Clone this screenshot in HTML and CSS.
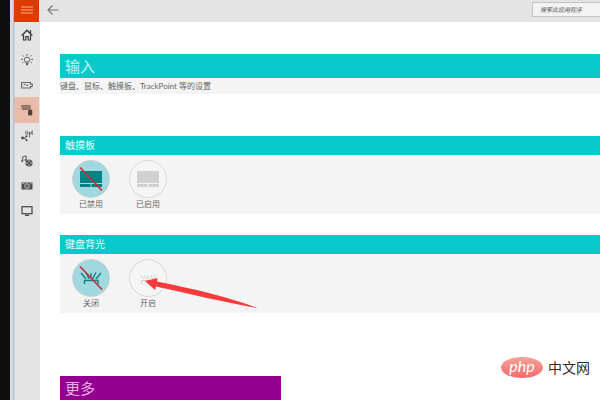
FILE: index.html
```
<!DOCTYPE html>
<html lang="zh-CN">
<head>
<meta charset="utf-8">
<title>输入</title>
<link rel="stylesheet" href="styles.css">
</head>
<body>
<div class="app">
  <nav class="sidebar" aria-label="导航">
    <button class="menu" type="button" aria-label="菜单">
      <svg width="12" height="8" viewBox="0 0 12 8"><path d="M0 1h12M0 4h12M0 7h12" stroke="#ffb08c" stroke-width="1"/></svg>
    </button>
    <a class="item" href="#home" aria-label="主页">
      <svg width="12" height="12" viewBox="0 0 12 12" fill="none" stroke="#3c3c3c"><path d="M.7 6.5 6 1.3l5.3 5.2" stroke-width="1.5"/><path d="M2.500 6v5h2.300V7.700h2.400V11h2.300V6M9.500 1v3" stroke-width="1.200"/></svg>
    </a>
    <a class="item" href="#power" aria-label="灯光">
      <svg width="12" height="12" viewBox="0 0 12 12" fill="none" stroke="#555"><path d="M4.600 8C3.200 6.800 3 5.500 3.800 4.200c1-1.300 3.400-1.300 4.400 0C9 5.500 8.800 6.800 7.400 8z"/><path d="M4.500 9.200h3M5 10.700h2" stroke-width="1.300"/><path d="M6 0v1.700M1.500 1.300l1.200 1.200M10.500 1.300 9.300 2.500M0 5.300h1.800M10.200 5.300H12M1.200 9l1.200-1M10.800 9 9.600 8"/></svg>
    </a>
    <a class="item" href="#battery" aria-label="电池">
      <svg width="12" height="12" viewBox="0 0 12 12" fill="none" stroke="#666"><path d="M.5 3.500h9v1.500h1.700v2.500H9.500V9h-9z" stroke-width="1.200"/><path d="M2.500 6l2-.7 1 1.300 2-.6"/></svg>
    </a>
    <a class="item current" href="#input" aria-label="输入">
      <svg width="12" height="12" viewBox="0 0 12 12"><path d="M0 1h9.500v4.500H7L6 6H1z" fill="#846c61"/><path d="M1 2.500h8M1.500 4.200h6" stroke="#d6b1a0" stroke-width=".6" stroke-dasharray="1 .7"/><rect x="7" y="5.500" width="4.300" height="6" rx="1.500" fill="#4d413c"/><path d="M9.200 4v3.500" stroke="#8b7367" stroke-width=".6"/></svg>
    </a>
    <a class="item" href="#network" aria-label="网络">
      <svg width="12" height="12" viewBox="0 0 12 12" fill="none" stroke="#4c4c4c"><path d="M1.500 8h2l2-1.500M3.500 8l2 2.300" /><g fill="#4c4c4c" stroke="none"><circle cx="1.500" cy="8" r="1.400"/><circle cx="5.500" cy="6.300" r="1"/><circle cx="5.600" cy="10.300" r="1"/><circle cx="8.500" cy="3" r="1"/></g><path d="M8.500 3v4.500M6.800 1.300c-.7 1-.7 2.200 0 3.200M10.200 1.300c.7 1 .7 2.200 0 3.200M5.300.5c-.8 1.500-.8 3 0 4.300M11.500.5c.6 1.500.6 3 0 4.300" stroke-width=".8"/></svg>
    </a>
    <a class="item" href="#media" aria-label="影音">
      <svg width="12" height="12" viewBox="0 0 12 12"><path d="M1.700 6V1.700L5.200 1v4" fill="none" stroke="#555"/><circle cx="1.200" cy="6" r="1.100" fill="#555"/><circle cx="4.500" cy="5" r="1" fill="#555"/><circle cx="8" cy="8" r="3.500" fill="#505050"/><g fill="#ccc"><circle cx="8" cy="6" r=".8"/><circle cx="8" cy="10" r=".8"/><circle cx="6" cy="8" r=".8"/><circle cx="10" cy="8" r=".8"/></g></svg>
    </a>
    <a class="item" href="#camera" aria-label="相机">
      <svg width="12" height="12" viewBox="0 0 12 12"><path d="M.5 2.500H11.500V9.500H.5z" fill="#4d4d4d"/><circle cx="6" cy="6" r="2.300" fill="#555" stroke="#d5d5d5" stroke-width=".9"/><path d="M1.300 3.500h2M9 3.700h1.500" stroke="#ccc" stroke-width=".8"/></svg>
    </a>
    <a class="item" href="#display" aria-label="显示">
      <svg width="12" height="12" viewBox="0 0 12 12"><rect x="1" y="1.700" width="10" height="7" fill="none" stroke="#505050" stroke-width="1.300"/><path d="M4 10.300h4" stroke="#505050" stroke-width="1.500"/></svg>
    </a>
  </nav>

  <div class="page">
    <header class="topbar">
      <button class="back" type="button" aria-label="返回">
        <svg width="12" height="10" viewBox="0 0 12 10" fill="none" stroke="#777" stroke-width="1.200"><path d="M5.500.5 1 5l4.500 4.500M1 5h10.500"/></svg>
      </button>
      <input class="search" type="search" aria-label="搜索此应用程序" placeholder="搜索此应用程序">
    </header>

    <main class="content">
      <section class="intro">
        <h1 class="title">输入</h1>
        <p class="summary">键盘、鼠标、触摸板、TrackPoint 等的设置</p>
      </section>

      <section class="card">
        <h2 class="heading">触摸板</h2>
        <div class="options">
          <button class="option" type="button" aria-pressed="true">
            <svg class="disc" viewBox="0 0 38 38"><circle cx="19" cy="19" r="18.500" fill="#9fd8de" stroke="#cbd3d4"/><path d="M8 11h22v12H8zM8 24h10.500v3H8zM19.500 24H30v3H19.500z" fill="#078282"/><path d="M8 7.500 30 30.500" stroke="#c52f38" stroke-width="1.700"/></svg>
            <span>已禁用</span>
          </button>
          <button class="option" type="button" aria-pressed="false">
            <svg class="disc" viewBox="0 0 38 38"><circle cx="19" cy="19" r="18.500" fill="#f5f5f5" stroke="#d7d7d7"/><path d="M8 11h22v12H8zM8 24h10.500v3H8zM19.500 24H30v3H19.500z" fill="#d0d1d3"/></svg>
            <span>已启用</span>
          </button>
        </div>
      </section>

      <section class="card">
        <h2 class="heading">键盘背光</h2>
        <div class="options">
          <button class="option" type="button" aria-pressed="true">
            <svg class="disc" viewBox="0 0 38 38"><circle cx="19" cy="19" r="18.500" fill="#9fd8de" stroke="#cbd3d4"/><path d="M12.500 25v-3.500h13.500V25M9 14l5 6M14 13.500l3 6.500M19 14v5M24 13.500 20.500 20M29 14l-5 6" fill="none" stroke="#128282" stroke-width="1.400"/><path d="M8 7.500 30 30.500" stroke="#c52f38" stroke-width="1.700"/></svg>
            <span>关闭</span>
          </button>
          <button class="option" type="button" aria-pressed="false">
            <svg class="disc" viewBox="0 0 38 38"><circle cx="19" cy="19" r="18.500" fill="#f5f5f5" stroke="#d7d7d7"/><path d="M12.500 25v-3.500h13.500V25M11 16l4 4M15 16l2 4M19 16v4M23 16l-2 4M27 16l-4 4" fill="none" stroke="#d0d0d0"/></svg>
            <span>开启</span>
            <svg class="pointer" width="114" height="31" viewBox="0 0 114 31"><path d="M0 3 12.500 0l-.5 3.500C50 11 85 19.500 114 30.500 80 24.500 45 16 11 8.500l-1 3.500z" fill="#f83a3a"/></svg>
          </button>
        </div>
      </section>

      <section class="more">
        <h2 class="title">更多</h2>
      </section>
    </main>
  </div>

  <div class="brand">
    <span class="badge">php</span>
    <span>中文网</span>
  </div>
</div>
</body>
</html>
```
FILE: styles.css
```
* {
  box-sizing: border-box;
}

body {
  margin: 0;
  background: #fff;
  color: #666;
  font-family: Lato, "Noto Sans CJK SC", sans-serif;
  font-size: 8px;
  line-height: 12px;
}

button {
  margin: 0;
  padding: 0;
  border: 0;
  background: none;
  color: inherit;
  font: inherit;
}

h1,
h2,
p {
  margin: 0;
  font-weight: 400;
}

svg {
  display: block;
}

.app {
  display: flex;
  height: 100vh;
  overflow: hidden;
  border-left: 10px solid #0f0f0f;
}

.sidebar {
  display: flex;
  flex: none;
  flex-direction: column;
  width: 30px;
  padding: 0 1px 0 4px;
  background: linear-gradient(to right, #d9dcdf 3px, #a9c2d6 3px, #a9c2d6 4px, #e4e4e4 5px);
}

.menu {
  display: grid;
  flex: none;
  place-items: center;
  height: 22px;
  padding-bottom: 3px;
  background: #dc3c00;
}

.item {
  display: grid;
  flex: none;
  place-items: center;
  height: 25px;
}

.current {
  height: 26px;
  background: #e8bca8;
}

.page {
  flex: 1;
  min-width: 0;
}

.topbar {
  display: flex;
  align-items: center;
  justify-content: space-between;
  height: 22px;
  padding: 0 0 3px 7px;
  background: #e4e4e4;
}

.search {
  width: 68px;
  height: 15px;
  padding: 0 7px;
  border: 1px solid #c4c4c4;
  border-right: 0;
  border-radius: 0;
  outline: 0;
  background: #f3f3f3;
  color: #555;
  font: italic 6px/12px Lato, "Noto Sans CJK SC", sans-serif;
}

.search::placeholder {
  color: #555;
  opacity: 1;
}

.content {
  padding: 32px 0 0 20px;
}

.title {
  height: 24px;
  padding-left: 5px;
  color: #c4f5f4;
  font-size: 15px;
  line-height: 24px;
}

.intro {
  margin-bottom: 42px;
  background: #f4f4f4;
}

.intro .title {
  background: #06caca;
}

.summary {
  padding: 2px 0;
}

.card {
  margin-bottom: 21px;
  background: #f4f4f4;
}

.heading {
  padding-left: 5px;
  background: #06caca;
  color: #e8fffe;
  font-size: 10px;
  line-height: 19px;
}

.options {
  display: flex;
  gap: 19px;
  padding: 5px 12px 4px;
}

.option {
  position: relative;
  display: flex;
  flex-direction: column;
  align-items: center;
  width: 38px;
}

.disc {
  width: 38px;
  height: 38px;
}

.pointer {
  position: absolute;
  top: 19px;
  left: 16px;
}

.more {
  width: 41%;
  margin-top: 63px;
  padding-bottom: 8px;
  background: #930090;
}

.more .title {
  color: #e6b0e3;
}

.brand {
  position: absolute;
  right: 10px;
  bottom: 22px;
  display: flex;
  align-items: center;
  gap: 5px;
  color: #352a2a;
  font-size: 14px;
  line-height: 21px;
}

.badge {
  width: 42px;
  height: 21px;
  border-radius: 50%;
  background: linear-gradient(#f9a19b, #f36b6b);
  color: #fff;
  font-size: 16px;
  font-style: italic;
  line-height: 18px;
  text-align: center;
}
```
